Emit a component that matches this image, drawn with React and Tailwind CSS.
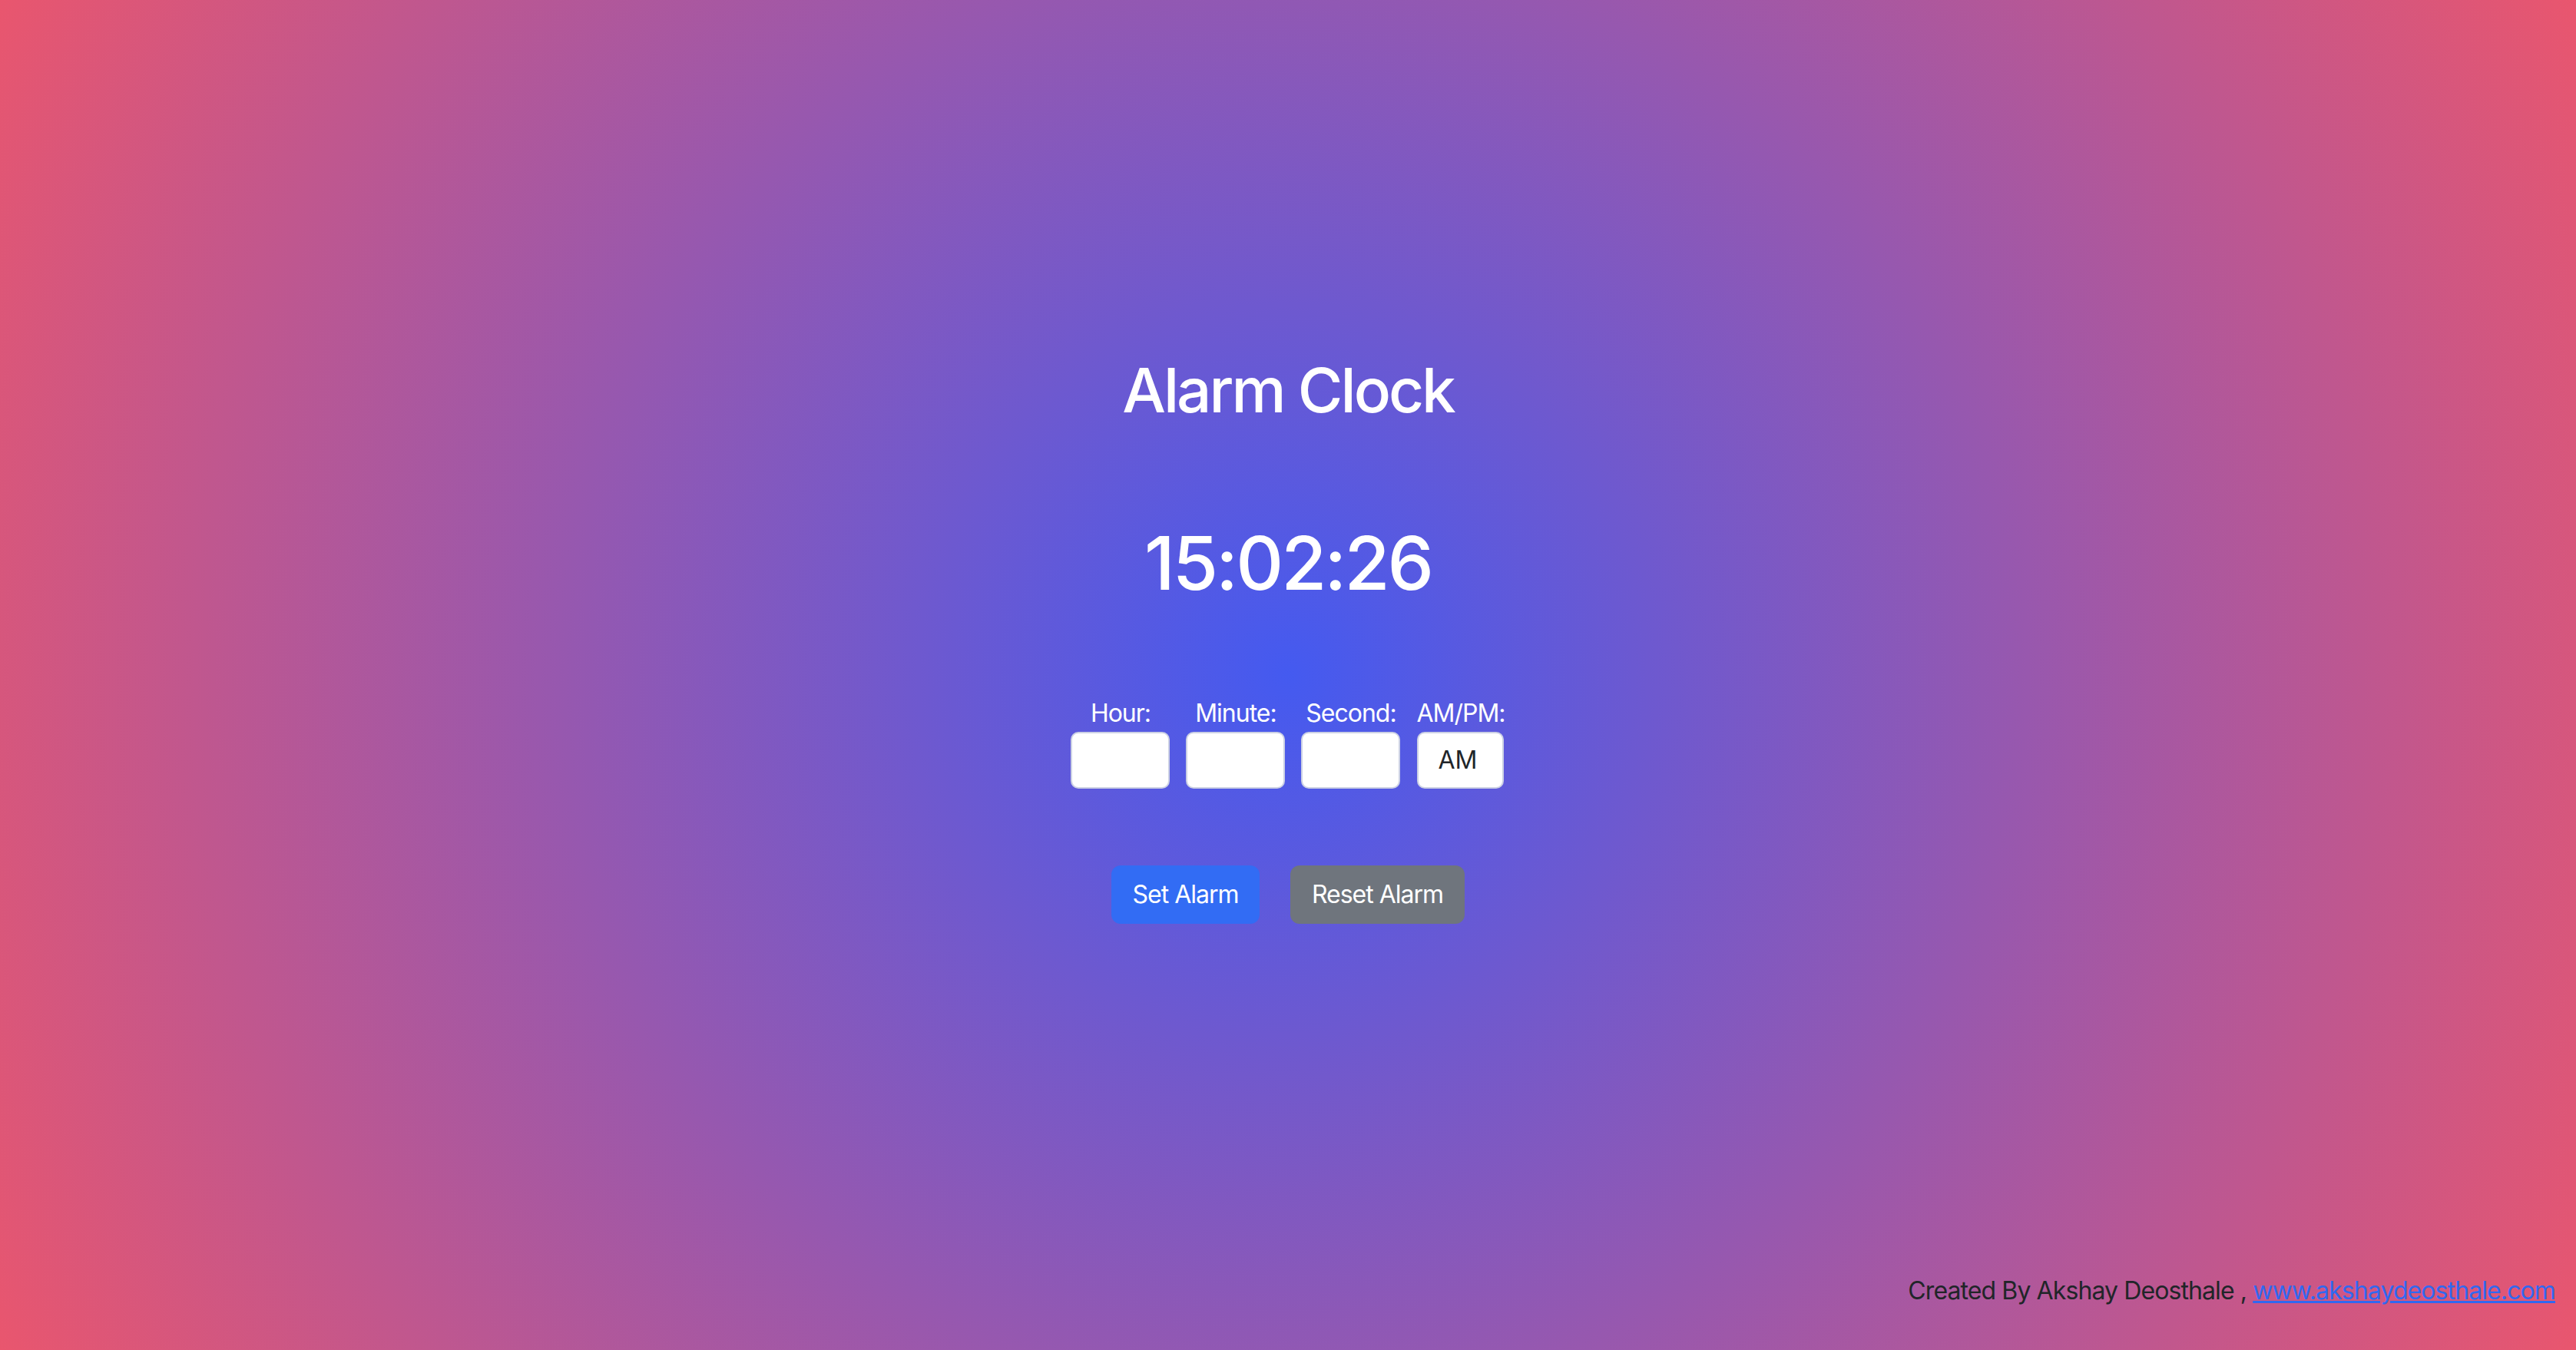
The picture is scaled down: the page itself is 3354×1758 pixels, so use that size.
import { useState } from 'react'

const fields = ['Hour', 'Minute', 'Second']

export default function App() {
  const [period, setPeriod] = useState('AM')

  return (
    <div
      className="min-h-screen flex flex-col bg-[radial-gradient(circle,#445af0,#e9566e)]"
      style={{ fontFamily: 'Inter, "Liberation Sans", sans-serif' }}
    >
      <main className="flex-1 flex flex-col items-center pt-[460px]">
        <h1 className="text-[80px] leading-[1.2] font-medium text-white tracking-[-3px]">Alarm Clock</h1>

        <div className="mt-[120px] text-[96px] leading-[1.2] font-medium text-white tracking-[-3px]">15:02:26</div>

        <div className="mt-[119px] flex gap-[21px]">
          {fields.map((f) => (
            <label key={f} className="flex flex-col items-center">
              <span className="text-[32px] leading-[1.2] text-white tracking-[-1px]">{f}:</span>
              <input
                type="text"
                className="mt-[4px] w-[129px] h-[74px] rounded-[10px] border-2 border-[#ccd1e4] bg-white outline-none"
              />
            </label>
          ))}
          <label className="flex flex-col items-center">
            <span className="text-[32px] leading-[1.2] text-white tracking-[-1px]">AM/PM:</span>
            <select
              value={period}
              onChange={(e) => setPeriod(e.target.value)}
              className="mt-[4px] w-[113px] h-[74px] appearance-none rounded-[10px] border-2 border-[#ccd1e4] bg-white pl-[25px] text-[32px] text-[#212529] outline-none"
            >
              <option>AM</option>
              <option>PM</option>
            </select>
          </label>
        </div>

        <div className="mt-[100px] flex gap-[40px]">
          <button className="w-[193px] h-[76px] rounded-[12px] bg-[#326cf4] text-[32px] text-white tracking-[-1px]">Set Alarm</button>
          <button className="w-[227px] h-[76px] rounded-[12px] bg-[#6f757d] text-[32px] text-white tracking-[-1px]">Reset Alarm</button>
        </div>
      </main>

      <footer className="text-right pr-[27px] pb-[58px] text-[32px] leading-[1.2] text-[#212529] tracking-[-0.9px]">
        Created By Akshay Deosthale ,{' '}
        <a href="#" className="text-[#3168f0] underline">www.akshaydeosthale.com</a>
      </footer>
    </div>
  )
}
